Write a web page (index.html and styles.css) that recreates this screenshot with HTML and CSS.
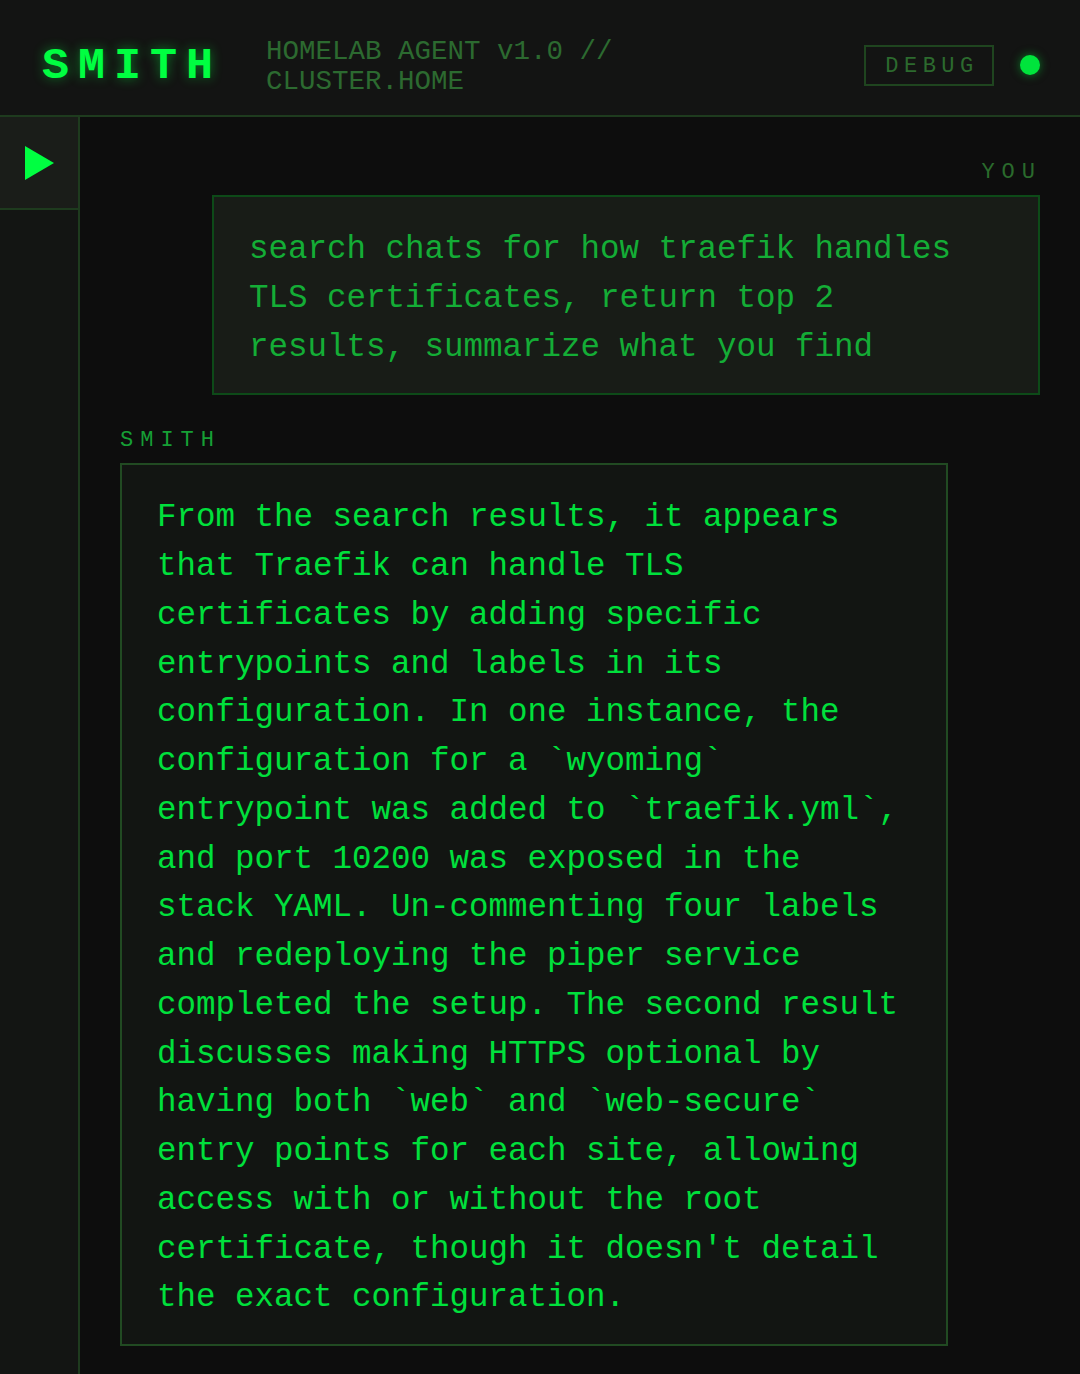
FILE: index.html
```html
<!DOCTYPE html>
<html lang="en">
<head>
<meta charset="utf-8">
<title>SMITH</title>
<link rel="stylesheet" href="styles.css">
</head>
<body>
<div class="app">
  <header class="topbar">
    <div class="logo">SMITH</div>
    <div class="subtitle">HOMELAB AGENT v1.0 // CLUSTER.HOME</div>
    <div class="spacer"></div>
    <button class="debug">DEBUG</button>
    <span class="status-dot"></span>
  </header>
  <div class="workspace">
    <aside class="sidebar">
      <div class="play-btn">
        <svg width="29" height="34" viewBox="0 0 29 34"><polygon points="0,0 29,17 0,34" fill="#00ff41"/></svg>
      </div>
    </aside>
    <main class="chat">
      <section class="msg msg-user">
        <div class="label">YOU</div>
        <div class="bubble">search chats for how traefik handles TLS certificates, return top 2 results, summarize what you find</div>
      </section>
      <section class="msg msg-agent">
        <div class="label">SMITH</div>
        <div class="bubble">From the search results, it appears that Traefik can handle TLS certificates by adding specific entrypoints and labels in its configuration. In one instance, the configuration for a `wyoming` entrypoint was added to `traefik.yml`, and port 10200 was exposed in the stack YAML. Un-commenting four labels and redeploying the piper service completed the setup. The second result discusses making HTTPS optional by having both `web` and `web-secure` entry points for each site, allowing access with or without the root certificate, though it doesn't detail the exact configuration.</div>
      </section>
    </main>
  </div>
</div>
</body>
</html>
```

FILE: styles.css
```css
html, body {
  margin: 0;
  padding: 0;
  background: #0d0d0d;
}

body {
  font-family: "Courier New", "Nimbus Mono PS", "FreeMono", "Liberation Mono", monospace;
  color: #00e03c;
}

.app {
  display: flex;
  flex-direction: column;
  min-height: 100vh;
}

.topbar {
  box-sizing: border-box;
  height: 117px;
  padding: 15px 40px 0 42px;
  display: flex;
  align-items: center;
  background: #131413;
  border-bottom: 2px solid #1e3b1e;
}

.logo {
  font-size: 45px;
  font-weight: bold;
  letter-spacing: 9px;
  color: #00ff41;
  text-shadow: 0 0 12px rgba(0, 255, 65, 0.45);
  line-height: 1;
  padding-top: 3px;
}

.subtitle {
  margin-left: 44px;
  width: 360px;
  padding-top: 3px;
  font-size: 27.5px;
  line-height: 30px;
  color: #2c6a30;
}

.spacer {
  flex: 1;
}

.debug {
  box-sizing: border-box;
  width: 130px;
  height: 41px;
  padding: 2px 0 0 6px;
  display: flex;
  align-items: center;
  justify-content: center;
  background: transparent;
  border: 2px solid #1f451f;
  font-family: inherit;
  font-size: 22px;
  letter-spacing: 5.5px;
  color: #2c6a2e;
}

.status-dot {
  width: 20px;
  height: 20px;
  margin-left: 26px;
  border-radius: 50%;
  background: #00e43c;
  box-shadow: 0 0 10px rgba(0, 228, 60, 0.5);
}

.workspace {
  flex: 1;
  display: flex;
}

.sidebar {
  width: 78px;
  flex-shrink: 0;
  background: #131513;
  border-right: 2px solid #1e3b1e;
}

.play-btn {
  height: 91px;
  display: flex;
  align-items: center;
  justify-content: center;
  background: #1a1d19;
  border-bottom: 2px solid #1e3b1e;
}

.chat {
  flex: 1;
  padding: 40px 40px 20px 40px;
  display: flex;
  flex-direction: column;
  gap: 30px;
}

.msg {
  display: flex;
  flex-direction: column;
}

.msg-user {
  align-items: flex-end;
}

.msg-agent {
  align-items: flex-start;
}

.label {
  box-sizing: border-box;
  height: 27px;
  line-height: 27px;
  padding-top: 2px;
  margin-bottom: 11px;
  font-size: 22px;
  letter-spacing: 7px;
}

.msg-user .label {
  color: #2a6a2c;
  margin-right: -2px;
}

.msg-agent .label {
  color: #169f35;
}

.bubble {
  box-sizing: border-box;
  width: 90%;
  padding: 29px 35px 21px 35px;
  font-size: 32.5px;
  line-height: 48.75px;
}

.msg-user .bubble {
  background: #181c17;
  border: 2px solid #0d4a18;
  color: #14ad36;
}

.msg-agent .bubble {
  background: #121512;
  border: 2px solid #214a22;
  color: #00e03c;
}
```
